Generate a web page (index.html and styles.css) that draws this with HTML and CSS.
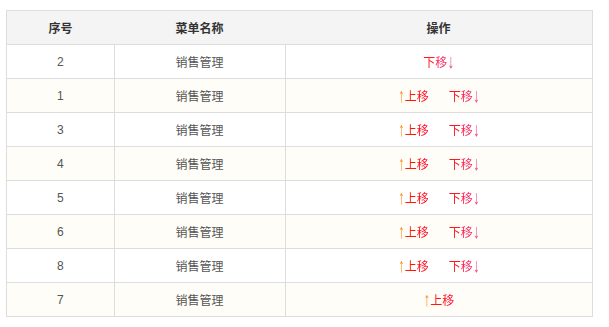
FILE: index.html
```html
<!DOCTYPE html>
<html lang="zh-CN">
<head>
<meta charset="utf-8">
<link rel="stylesheet" href="styles.css">
</head>
<body>
<table class="grid">
  <thead>
    <tr><th class="c1">序号</th><th class="c2">菜单名称</th><th class="c3">操作</th></tr>
  </thead>
  <tbody>
    <tr><td>2</td><td>销售管理</td><td><span class="ops"><a class="down"><span class="tx">下移</span><span class="ar">↓</span></a></span></td></tr>
    <tr><td>1</td><td>销售管理</td><td><span class="ops"><a class="up"><span class="ar">↑</span><span class="tx">上移</span></a><a class="down"><span class="tx">下移</span><span class="ar">↓</span></a></span></td></tr>
    <tr><td>3</td><td>销售管理</td><td><span class="ops"><a class="up"><span class="ar">↑</span><span class="tx">上移</span></a><a class="down"><span class="tx">下移</span><span class="ar">↓</span></a></span></td></tr>
    <tr><td>4</td><td>销售管理</td><td><span class="ops"><a class="up"><span class="ar">↑</span><span class="tx">上移</span></a><a class="down"><span class="tx">下移</span><span class="ar">↓</span></a></span></td></tr>
    <tr><td>5</td><td>销售管理</td><td><span class="ops"><a class="up"><span class="ar">↑</span><span class="tx">上移</span></a><a class="down"><span class="tx">下移</span><span class="ar">↓</span></a></span></td></tr>
    <tr><td>6</td><td>销售管理</td><td><span class="ops"><a class="up"><span class="ar">↑</span><span class="tx">上移</span></a><a class="down"><span class="tx">下移</span><span class="ar">↓</span></a></span></td></tr>
    <tr><td>8</td><td>销售管理</td><td><span class="ops"><a class="up"><span class="ar">↑</span><span class="tx">上移</span></a><a class="down"><span class="tx">下移</span><span class="ar">↓</span></a></span></td></tr>
    <tr><td>7</td><td>销售管理</td><td><span class="ops"><a class="up"><span class="ar">↑</span><span class="tx">上移</span></a></span></td></tr>
  </tbody>
</table>
</body>
</html>
```
FILE: styles.css
```css
html, body { margin: 0; padding: 0; background: #fff; }
body { padding: 10px 0 0 6px; }
.grid {
  border-collapse: collapse;
  width: 587px;
  table-layout: fixed;
  font-family: "Liberation Sans", "Noto Sans CJK SC", sans-serif;
  font-size: 12px;
  color: #555;
  border: 1px solid #ddd;
}
.c1 { width: 107px; }
.c2 { width: 171px; }
.grid th {
  height: 33px;
  padding: 0;
  background: #f4f4f4;
  color: #333;
  font-weight: bold;
  text-align: center;
  border-bottom: 1px solid #ddd;
}
.grid td {
  height: 33px;
  padding: 0;
  text-align: center;
  border: 1px solid #ddd;
}
.grid tbody tr:nth-child(even) td { background: #fffdf8; }
.ops { display: inline-flex; gap: 20px; align-items: center; }
.ops a { display: inline-flex; align-items: center; }
.tx {
  display: inline-block;
  -webkit-background-clip: text;
  background-clip: text;
  -webkit-text-fill-color: transparent;
  color: transparent;
}
.up .tx { background-image: linear-gradient(to right, #ff2200 0%, #ff0a10 60%, #ff1040 100%); }
.down .tx { background-image: linear-gradient(to right, #ff1400 0%, #ff1c40 50%, #f5307a 100%); }
.ar {
  display: inline-block;
  font-size: 13px;
  line-height: 1;
  width: 7px;
  transform: scaleY(1.55);
}
.up .ar { color: #ff8a10; }
.down .ar { color: #f04a8a; }
```
